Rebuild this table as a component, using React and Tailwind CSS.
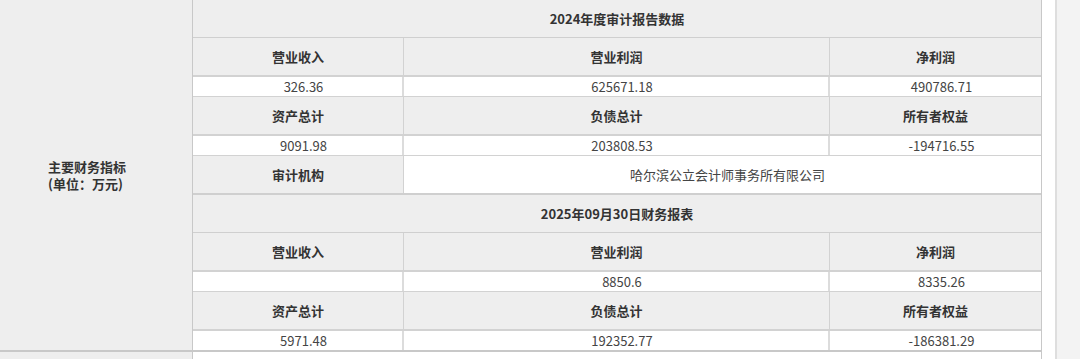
import React from "react";

const font = { fontFamily: '"Noto Sans CJK SC", "Noto Sans", sans-serif' };

function TitleRow({ text }) {
  return (
    <div className="h-[38px] shrink-0 flex items-center justify-center border-b border-[#cfcfcf] bg-[#eeeeee] text-[13px] font-bold text-[#333]">
      {text}
    </div>
  );
}

function HeaderRow({ cells }) {
  return (
    <div className="grid grid-cols-[211px_426px_211px] h-[39px] shrink-0 border-b-2 border-[#d2d2d2] bg-[#eeeeee]">
      {cells.map((c, i) => (
        <div
          key={i}
          className={`flex items-center justify-center text-[13px] font-bold text-[#333] ${i < 2 ? "border-r border-[#d2d2d2]" : ""}`}
        >
          {c}
        </div>
      ))}
    </div>
  );
}

function ValueRow({ cells, last = false }) {
  return (
    <div
      className={`grid grid-cols-[211px_426px_211px] shrink-0 bg-white ${last ? "h-[19px]" : "h-[20px] border-b border-[#d2d2d2]"}`}
    >
      {cells.map((c, i) => (
        <div
          key={i}
          className={`flex items-center justify-center pl-[12px] text-[13px] leading-none text-[#444] ${i < 2 ? "border-r-2 border-[#dcdcdc]" : ""}`}
        >
          {c}
        </div>
      ))}
    </div>
  );
}

export default function App() {
  return (
    <div className="w-[1080px] h-[359px] overflow-hidden flex bg-[#f3f3f3]" style={font}>
      <div className="w-[1041px] shrink-0 flex flex-col">
        <div className="flex shrink-0 border-b-2 border-[#c8c8c8]">
          <div className="w-[193px] shrink-0 border-r border-[#c8c8c8] bg-[#eeeeee] flex items-center justify-center pr-[18px]">
            <div className="text-[13px] font-bold leading-[17px] text-[#333] text-left">
              主要财务指标
              <br />
              (单位：万元)
            </div>
          </div>
          <div className="w-[848px] flex flex-col">
            <TitleRow text="2024年度审计报告数据" />
            <HeaderRow cells={["营业收入", "营业利润", "净利润"]} />
            <ValueRow cells={["326.36", "625671.18", "490786.71"]} />
            <HeaderRow cells={["资产总计", "负债总计", "所有者权益"]} />
            <ValueRow cells={["9091.98", "203808.53", "-194716.55"]} />
            <div className="grid grid-cols-[211px_637px] h-[39px] shrink-0 border-b-2 border-[#cfcfcf]">
              <div className="flex items-center justify-center border-r border-[#d2d2d2] bg-[#eeeeee] text-[13px] font-bold text-[#333]">
                审计机构
              </div>
              <div className="flex items-center justify-center pl-[10px] bg-white text-[13px] text-[#444]">
                哈尔滨公立会计师事务所有限公司
              </div>
            </div>
            <TitleRow text="2025年09月30日财务报表" />
            <HeaderRow cells={["营业收入", "营业利润", "净利润"]} />
            <ValueRow cells={["", "8850.6", "8335.26"]} />
            <HeaderRow cells={["资产总计", "负债总计", "所有者权益"]} />
            <ValueRow cells={["5971.48", "192352.77", "-186381.29"]} last />
          </div>
        </div>
        <div className="flex flex-1">
          <div className="w-[193px] border-r border-[#c8c8c8] bg-[#eeeeee]" />
          <div className="flex-1 bg-white" />
        </div>
      </div>
      <div className="w-[14px] shrink-0 border-l border-[#c8c8c8] bg-white" />
      <div className="flex-1 border-l-2 border-[#dedede] bg-[#f3f3f3]" />
    </div>
  );
}
